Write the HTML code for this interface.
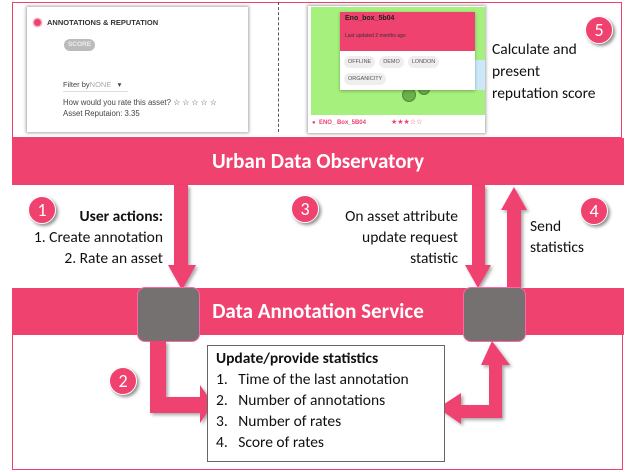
<!DOCTYPE html>
<html><head><style>
body{margin:0;width:628px;height:472px;background:#fff;position:relative;overflow:hidden;font-family:"Liberation Sans",sans-serif}
.a{position:absolute}
.cal{font-family:"Carlito","Liberation Sans",sans-serif}
.circ{position:absolute;width:26px;height:26px;border-radius:50%;background:#EF426F;color:#fff;font-size:18px;text-align:center;line-height:26px;box-shadow:2px 2px 3px rgba(0,0,0,.45);border:1px solid #fff}
.txt{font-size:15.5px;color:#111;line-height:21px}
.chip{display:inline-block;background:#eee;border-radius:7px;font-size:5.5px;line-height:8px;padding:2px 4px;color:#555;margin-right:4px;vertical-align:top}
</style></head><body>
<div class="a" style="left:12px;top:2px;width:608px;height:134px;border:1.5px solid #EF426F"></div>
<div class="a" style="left:27px;top:7px;width:221px;height:125px;background:#fff;box-shadow:0 0 3px 1px rgba(0,0,0,.35)"></div>
<div class="a" style="left:34px;top:19px;width:7px;height:7px;border-radius:50%;background:#EF426F;box-shadow:0 0 0 1.5px #f8b5c6"></div>
<div class="a" style="left:47px;top:18px;font-size:7.5px;font-weight:bold;color:#333">ANNOTATIONS &amp; REPUTATION</div>
<div class="a" style="left:64px;top:39px;width:31px;height:12px;border-radius:6px;background:#bbb;color:#eee;font-size:6.5px;font-weight:bold;text-align:center;line-height:12px">SCORE</div>
<div class="a" style="left:63px;top:80px;font-size:7.5px;color:#444">Filter by<span style="color:#aaa">NONE</span> &nbsp;&nbsp;▾</div>
<div class="a" style="left:63px;top:91px;width:65px;height:1px;background:#ddd"></div>
<div class="a" style="left:63px;top:98px;font-size:7.8px;color:#444">How would you rate this asset? ☆ ☆ ☆ ☆ ☆</div>
<div class="a" style="left:63px;top:109px;font-size:7.8px;color:#444">Asset Reputaion: 3.35</div>
<div class="a" style="left:278px;top:2px;height:130px;border-left:1.5px dashed #555"></div>
<div class="a" style="left:308px;top:6px;width:177px;height:127px;background:#fff;box-shadow:0 0 3px 1px rgba(0,0,0,.35)"></div>
<div class="a" style="left:311px;top:7px;width:174px;height:108px;background:#a6f07e"></div>
<div class="a" style="left:470px;top:60px;width:15px;height:30px;background:#cce8f8"></div>
<div class="a" style="left:402px;top:88px;width:12px;height:12px;border-radius:50%;background:#6bb04a;border:1px solid #4a8a30"></div>
<div class="a" style="left:418px;top:83px;width:10px;height:10px;border-radius:50%;background:#6bb04a;border:1px solid #4a8a30"></div>
<div class="a" style="left:340px;top:12px;width:135px;height:78px;background:#fff;box-shadow:0 1px 3px rgba(0,0,0,.3)"></div>
<div class="a" style="left:340px;top:12px;width:135px;height:39px;background:#EF426F"></div>
<div class="a" style="left:345px;top:15px;font-size:7px;font-weight:bold;color:#222">Eno_box_5b04</div>
<div class="a" style="left:345px;top:33px;font-size:5px;color:#333">Last updated 2 months ago</div>
<div class="a" style="left:344px;top:56px;width:130px;line-height:17px"><span class="chip">OFFLINE</span><span class="chip">DEMO</span><span class="chip">LONDON</span><br><span class="chip">ORGANICITY</span></div>
<div class="a" style="left:312px;top:120px;font-size:6px;color:#EF426F;font-weight:bold">● &nbsp;ENO_ Box_5B04</div>
<div class="a" style="left:391px;top:118px;font-size:7px;color:#EF426F">★★★☆☆</div>
<div class="a cal" style="left:492px;top:39px;font-size:15.5px;line-height:22px;color:#111">Calculate and<br>present<br>reputation score</div>
<div class="circ cal" style="left:585px;top:16px">5</div>
<div class="a cal" style="left:12px;top:138px;width:612px;height:47px;background:#EF426F;color:#fff;font-size:21px;font-weight:bold;text-align:center;line-height:47px">Urban Data Observatory</div>
<svg class="a" style="left:0;top:0" width="628" height="472">
<defs><filter id="s"><feDropShadow dx="2" dy="2" stdDeviation="1.5" flood-opacity=".35"/></filter></defs>
<g fill="#EF426F" filter="url(#s)">
<polygon points="174,185 188,185 188,265 196,265 182,290 168,265 174,265"/>
<polygon points="472,185 485,185 485,265 491,265 478,288 465,265 472,265"/>
<polygon points="507,288 521,288 521,210 527,210 514,187 501,210 507,210"/>
</g>
</svg>
<div class="a cal txt" style="left:0;width:163px;top:206px;text-align:right"><b>User actions:</b><br>1. Create annotation<br>2. Rate an asset</div>
<div class="a cal txt" style="left:290px;width:168px;top:206px;text-align:right">On asset attribute<br>update request<br>statistic</div>
<div class="a cal txt" style="left:530px;top:216px">Send<br>statistics</div>
<div class="circ cal" style="left:28px;top:196px">1</div>
<div class="circ cal" style="left:291px;top:195px">3</div>
<div class="circ cal" style="left:580px;top:197px">4</div>
<div class="a cal" style="left:12px;top:288px;width:612px;height:47px;background:#EF426F;color:#fff;font-size:21px;font-weight:bold;text-align:center;line-height:47px">Data Annotation Service</div>
<div class="a" style="left:12px;top:335px;width:609px;height:134px;border:1.5px solid #EF426F;border-top:none"></div>
<div class="a" style="left:137px;top:287px;width:61px;height:53px;background:#767171;border-radius:8px;border:1px solid #f6a"></div>
<div class="a" style="left:463px;top:287px;width:61px;height:53px;background:#767171;border-radius:8px;border:1px solid #f6a"></div>
<svg class="a" style="left:0;top:0" width="628" height="472">
<g fill="#EF426F" filter="url(#s)">
<polygon points="150,341 166,341 166,397 200,397 200,385 213,404 200,423 200,413 150,413"/>
<polygon points="492,341 510,365 502,365 502,418 461,418 461,424 438,408 461,393 461,405 489,405 489,365 481,365"/>
</g>
</svg>
<div class="a" style="left:207px;top:345px;width:236px;height:115px;border:1px solid #666;background:#fff"></div>
<div class="a cal txt" style="left:216px;top:348px;line-height:21px"><b>Update/provide statistics</b><br>1.&nbsp;&nbsp; Time of the last annotation<br>2.&nbsp;&nbsp; Number of annotations<br>3.&nbsp;&nbsp; Number of rates<br>4.&nbsp;&nbsp; Score of rates</div>
<div class="circ cal" style="left:109px;top:367px">2</div>
</body></html>
